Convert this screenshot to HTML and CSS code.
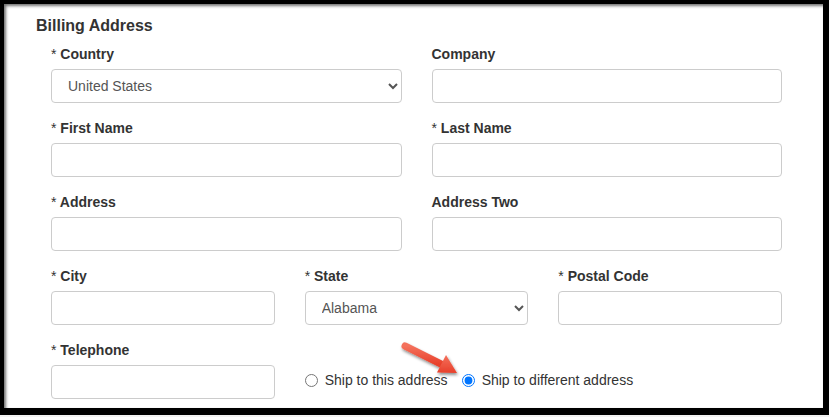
FILE: index.html
```html
<!DOCTYPE html>
<html lang="en">
<head>
<meta charset="utf-8">
<title>Billing Address</title>
<link rel="stylesheet" href="styles.css">
</head>
<body>
<div class="frame">
  <div class="panel">
    <h3 class="title">Billing Address</h3>
    <div class="form">
      <div class="row two">
        <div class="group">
          <label class="lbl"><span class="req">*</span> Country</label>
          <select class="ctl sel"><option>United States</option></select>
        </div>
        <div class="group">
          <label class="lbl">Company</label>
          <input class="ctl" type="text">
        </div>
      </div>
      <div class="row two">
        <div class="group">
          <label class="lbl"><span class="req">*</span> First Name</label>
          <input class="ctl" type="text">
        </div>
        <div class="group">
          <label class="lbl"><span class="req">*</span> Last Name</label>
          <input class="ctl" type="text">
        </div>
      </div>
      <div class="row two">
        <div class="group">
          <label class="lbl"><span class="req">*</span> Address</label>
          <input class="ctl" type="text">
        </div>
        <div class="group">
          <label class="lbl">Address Two</label>
          <input class="ctl" type="text">
        </div>
      </div>
      <div class="row three">
        <div class="group">
          <label class="lbl"><span class="req">*</span> City</label>
          <input class="ctl" type="text">
        </div>
        <div class="group">
          <label class="lbl"><span class="req">*</span> State</label>
          <select class="ctl sel"><option>Alabama</option></select>
        </div>
        <div class="group">
          <label class="lbl"><span class="req">*</span> Postal Code</label>
          <input class="ctl" type="text">
        </div>
      </div>
      <div class="row three">
        <div class="group">
          <label class="lbl"><span class="req">*</span> Telephone</label>
          <input class="ctl" type="text">
        </div>
        <div class="radios">
          <label class="radio"><input type="radio" name="ship"> Ship to this address</label>
          <label class="radio"><input type="radio" name="ship" checked> Ship to different address</label>
        </div>
      </div>
    </div>
    <svg class="arrow" width="80" height="50" viewBox="0 0 80 50">
      <defs>
        <filter id="sh" x="-20%" y="-20%" width="150%" height="160%">
          <feDropShadow dx="1" dy="2" stdDeviation="1.5" flood-color="#000" flood-opacity="0.45"/>
        </filter>
        <linearGradient id="gr" x1="0" y1="0" x2="0" y2="1">
          <stop offset="0" stop-color="#f4715c"/>
          <stop offset="1" stop-color="#e8402b"/>
        </linearGradient>
      </defs>
      <g filter="url(#sh)">
        <line x1="10" y1="12" x2="46" y2="30" stroke="url(#gr)" stroke-width="7" stroke-linecap="round"/>
        <polygon points="62,39 42,38.5 51,21" fill="url(#gr)"/>
      </g>
    </svg>
  </div>
</div>
</body>
</html>
```

FILE: styles.css
```css
html, body {
  margin: 0;
  padding: 0;
}
body {
  background: #f2f2f2;
  width: 829px;
  height: 417px;
  overflow: hidden;
  font-family: "Liberation Sans", Arial, sans-serif;
  color: #333;
}
.frame {
  box-sizing: border-box;
  width: 829px;
  height: 415px;
  border-style: solid;
  border-color: #000;
  border-width: 4px 6px 7px 4px;
  background: #fff;
  box-shadow: inset 2px 2px 3px rgba(0, 0, 0, 0.55);
}
.panel {
  position: relative;
  padding: 12px 41px 0 32px;
}
.title {
  margin: 0 0 8px 0;
  font-size: 16px;
  line-height: 20px;
  font-weight: bold;
  color: #333;
}
.form {
  padding-left: 15px;
}
.row {
  display: grid;
  column-gap: 30px;
}
.row.two {
  grid-template-columns: 1fr 1fr;
}
.row.three {
  grid-template-columns: 1fr 1fr 1fr;
}
.group {
  display: flex;
  flex-direction: column;
  margin-bottom: 15px;
}
.lbl {
  display: block;
  font-size: 14px;
  line-height: 20px;
  font-weight: bold;
  margin-bottom: 5px;
  color: #333;
}
.req {
  font-weight: normal;
}
.ctl {
  box-sizing: border-box;
  height: 34px;
  width: 100%;
  margin: 0;
  padding: 6px 12px;
  border: 1px solid #ccc;
  border-radius: 4px;
  background: #fff;
  font-family: "Liberation Sans", Arial, sans-serif;
  font-size: 14px;
  color: #555;
}
.sel {
  padding-left: 12px;
}
.radios {
  grid-column: 2 / span 2;
  display: flex;
  align-items: center;
  gap: 14px;
  height: 34px;
  margin-top: 23px;
  font-size: 14px;
  color: #333;
}
.radio {
  display: flex;
  align-items: center;
  gap: 7px;
  font-weight: normal;
}
.radio input {
  margin: 0;
  width: 13px;
  height: 13px;
}
.arrow {
  position: absolute;
  left: 391px;
  top: 330px;
}
```
